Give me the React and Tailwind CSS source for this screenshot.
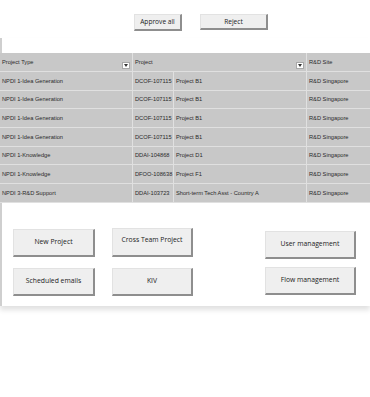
import React from "react";

const rows = [
  ["NPDI 1-Idea Generation", "DCOF-107115", "Project B1"],
  ["NPDI 1-Idea Generation", "DCOF-107115", "Project B1"],
  ["NPDI 1-Idea Generation", "DCOF-107115", "Project B1"],
  ["NPDI 1-Idea Generation", "DCOF-107115", "Project B1"],
  ["NPDI 1-Knowledge", "DDAI-104868", "Project D1"],
  ["NPDI 1-Knowledge", "DFOO-108638", "Project F1"],
  ["NPDI 3-R&D Support", "DDAI-103723", "Short-term Tech Asst - Country A"],
];

function Drop() {
  return (
    <div className="absolute right-[2px] bottom-[2px] w-[8px] h-[7px] bg-white border border-[#a8a8a8] flex items-center justify-center">
      <svg width="4" height="3" viewBox="0 0 4 3">
        <path d="M0 0H4L2 3Z" fill="#333" />
      </svg>
    </div>
  );
}

function Btn({ children, className }) {
  return (
    <div
      className={
        "flex items-center justify-center bg-[#efefef] border border-[#e2e2e2] border-r-2 border-b-2 border-r-[#8e8e8e] border-b-[#8e8e8e] text-[#222] " +
        className
      }
      style={{ fontFamily: "'Open Sans', 'Noto Sans', sans-serif" }}
    >
      {children}
    </div>
  );
}

export default function App() {
  const cell = "flex items-center pl-[2px] border-r border-[#e0e0e0] overflow-hidden whitespace-nowrap";
  return (
    <div
      className="w-[370px] h-[397px] bg-white overflow-hidden text-[#222]"
      style={{ fontFamily: "'DejaVu Sans', sans-serif" }}
    >
      <div className="h-[38px] flex items-start pt-[14px] pl-[134px] gap-[18px]">
        <Btn className="w-[48px] h-[17px] text-[6.6px]">Approve all</Btn>
        <Btn className="w-[68px] h-[16px] text-[6.6px]">Reject</Btn>
      </div>
      <div className="h-[268px] border-l-2 border-[#cfcfcf] bg-white shadow-[0_4px_5px_rgba(0,0,0,0.12)] pt-[15px]">
        <div
          className="bg-[#c8c8c8] text-[5.7px] text-[#2a2a2a] -ml-[2px]"
          style={{ fontFamily: "'Liberation Sans', Arial, sans-serif" }}
        >
          <div className="flex h-[19px] border-b border-[#e0e0e0]">
            <div className={cell + " w-[133px] relative"}>
              Project Type
              <Drop />
            </div>
            <div className={cell + " w-[174px] relative"}>
              Project
              <Drop />
            </div>
            <div className={cell + " flex-1 border-r-0"}>R&amp;D Site</div>
          </div>
          {rows.map((r, i) => (
            <div key={i} className="flex h-[18.7px] border-b border-[#e0e0e0]">
              <div className={cell + " w-[133px]"}>{r[0]}</div>
              <div className={cell + " w-[41px]"}>{r[1]}</div>
              <div className={cell + " w-[133px]"}>{r[2]}</div>
              <div className={cell + " flex-1 border-r-0"}>R&amp;D Singapore</div>
            </div>
          ))}
        </div>
        <div className="flex mt-[24px] text-[6.8px]">
          <div className="flex flex-col ml-[11px] w-[82px] gap-[11px] mt-[2px]">
            <Btn className="h-[28px]">New Project</Btn>
            <Btn className="h-[28px]">Scheduled emails</Btn>
          </div>
          <div className="flex flex-col ml-[17px] w-[81px] gap-[11px] mt-[1px]">
            <Btn className="h-[29px] pb-[3px]">Cross Team Project</Btn>
            <Btn className="h-[28px]">KIV</Btn>
          </div>
          <div className="flex flex-col ml-[72px] w-[91px] gap-[8px] mt-[4px]">
            <Btn className="h-[28px]">User management</Btn>
            <Btn className="h-[28px]">Flow management</Btn>
          </div>
        </div>
      </div>
    </div>
  );
}
